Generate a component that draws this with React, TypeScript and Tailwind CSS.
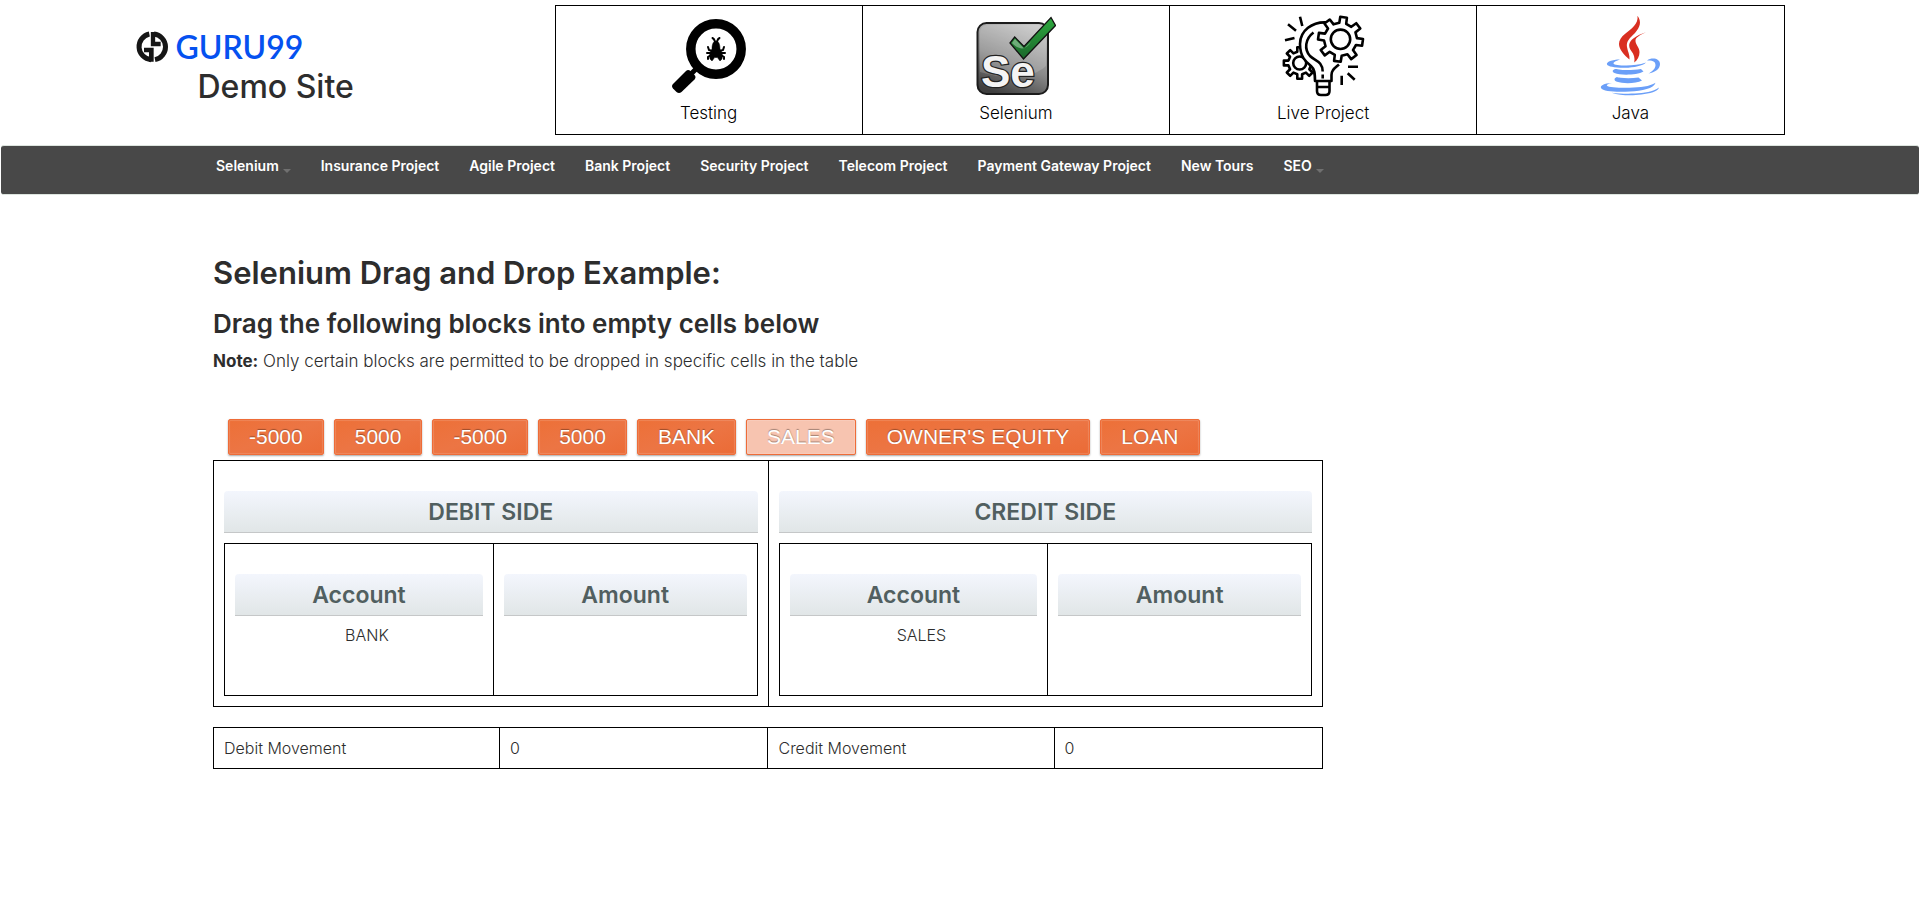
import React from 'react';

function BadgeLogo() {
  return (
    <svg viewBox="0 0 96 96" className="size-8 shrink-0" fill="none" stroke="#161616" strokeWidth="15" aria-hidden="true">
      <path d="M40 9A39 39 0 0 0 45 86" />
      <path d="M57 86A39 39 0 0 0 54 9" />
      <path d="M46 92V57H24" strokeWidth="14" />
      <path d="M51 3V39H74" strokeWidth="13" />
    </svg>
  );
}

function TestingIcon() {
  return (
    <svg viewBox="0 0 80 80" className="size-20" fill="none" stroke="#000" aria-hidden="true">
      <circle cx="47" cy="33" r="25.200" strokeWidth="9.500" />
      <path d="M22 58l6-6" strokeWidth="5" />
      <path
        d="M4 68L17 55q2-2 4.500 0l4 4q2 2 0 4.500L12.500 76q-2.500 2-5 0L4 72.500Q2 70 4 68z"
        fill="#000"
        stroke="none"
      />
      <path
        d="M47 25c-3 0-4 4-4 8-2 3-3 6-2 10l2 2 3-4 1 1 1-1 3 4 2-2c1-4 0-7-2-10 0-4-1-8-4-8z"
        fill="#000"
        strokeWidth="0.500"
      />
      <path
        d="M46 26c-.500-2-.500-3-2.500-4M48 26c.500-2 .500-3 2.500-4M43 35l-3-1-1-3M51 35l3-1 1-3M42 37l-4 0M52 37l4 0M42 39l-3 2v2M52 39l3 2v2"
        strokeWidth="2"
        strokeLinecap="round"
      />
    </svg>
  );
}

function SeleniumIcon() {
  return (
    <svg viewBox="0 0 80 80" className="size-20" aria-hidden="true">
      <defs>
        <linearGradient id="se-box" x1="0.700" y1="0" x2="0.300" y2="1">
          <stop offset="0" stopColor="#c4c4c4" />
          <stop offset="0.550" stopColor="#8a8a8a" />
          <stop offset="1" stopColor="#3f3f3f" />
        </linearGradient>
        <linearGradient id="se-tick" x1="0" y1="0" x2="0" y2="1">
          <stop offset="0" stopColor="#2eaa3f" />
          <stop offset="1" stopColor="#19662a" />
        </linearGradient>
      </defs>
      <rect x="1.500" y="7" width="70.500" height="71" rx="9" fill="url(#se-box)" stroke="#1c1c1c" strokeWidth="2" />
      <path d="M4 56C25 62 52 66 70 50V17q0-8-8-8H12q-8 0-8 8z" fill="#fff" opacity="0.160" />
      <text
        x="5"
        y="71"
        className="font-['Liberation_Sans',sans-serif] text-[44px] font-bold"
        fill="#f4f4f4"
        stroke="#222"
        strokeWidth="2.500"
        paintOrder="stroke"
      >
        Se
      </text>
      <path d="M34 27l4.700-6 9.300 9.500L75 1.500 79.500 9.500 47.500 43z" fill="url(#se-tick)" stroke="#111" strokeWidth="1.300" />
      <path d="M36 27l3-4 9 9.500L55 26c-5 8-11 9-19 1z" fill="#fff" opacity="0.350" />
    </svg>
  );
}

function gearPath(cx: number, cy: number, outer: number, root: number, teeth: number, turn: number) {
  const step = (Math.PI * 2) / teeth;
  const points: string[] = [];
  for (let i = 0; i < teeth; i++) {
    const a = turn + i * step;
    const corners: [number, number][] = [
      [root, -0.27],
      [outer, -0.19],
      [outer, 0.19],
      [root, 0.27],
    ];
    corners.forEach(([r, f]) => {
      points.push(`${(cx + r * Math.sin(a + f * step)).toFixed(2)} ${(cy - r * Math.cos(a + f * step)).toFixed(2)}`);
    });
  }
  return `M${points.join('L')}Z`;
}

function LiveProjectIcon() {
  return (
    <svg
      viewBox="0 0 80 80"
      className="size-20 overflow-visible"
      fill="none"
      stroke="#000"
      strokeWidth="2.600"
      strokeLinejoin="round"
      aria-hidden="true"
    >
      <path d={gearPath(16.7, 47, 16, 11.5, 8, 0)} />
      <circle cx="16.700" cy="47" r="6.500" />
      <path
        d="M45 6.500C29 5 17 15 17 28c0 13 6 18 11 22 3.500 3 4 7 4 15h16.500v-7c0-4 3-6 7.500-9.500L64 30z"
        fill="#fff"
        stroke="none"
      />
      <path d="M45 6.500C29 5 17 15 17 28c0 13 6 18 11 22 3.500 3 4 7 4 15h16.500v-6c0-5 3-6.500 7.500-10.500" />
      <path d="M30.500 16.500C22 23 21 33 27 40c5 5 12.500 5 12.700 15.500M39.700 58.500v4" />
      <path d={gearPath(57.5, 23.3, 22.5, 16.5, 8, 0.14)} fill="#fff" />
      <circle cx="57.500" cy="23.300" r="9.700" />
      <path d="M34 65v10q0 4 4 4h4.500q4 0 4-4V65M34 71h12.500" />
      <path d="M17 .700l2.300 9.300M5 8.300l8 6.400M2 24.300l9.500-2.300M65 50.700h10M64.700 57.300l7 6.500M58.700 59.700V69" />
    </svg>
  );
}

function JavaIcon() {
  return (
    <svg viewBox="0 0 80 80" className="size-20 overflow-visible" aria-hidden="true">
      <g fill="#d92f21">
        <path d="M47.500-.300C52 6 50 11 45 17c-5 5-9 8-8 14 .500 4 3 8 2.500 12.500C34 39 29 33 29 28c0-8 10-12 15-18 2.500-3 4-6 3.500-10.300z" />
        <path d="M56 16.300c-6 3-11 5-10.500 9 .500 4 4 6 4 11 0 4-2 8-5.200 10.200.700-5-.300-8-3-11.500-3.500-5-2.500-9 2-12.500 4-3 8-4.500 12.700-6.200z" />
      </g>
      <g fill="#6b9ff8">
        <path d="M30 43.500c-8 0-14 2.500-13 5 1 2 8 3.500 18 3.300 9-.200 18-2 21-5.300-7 2.500-15 3.200-22 3-7-.200-11-1-10.500-2.500.300-1.200 3-2.200 6.500-3.500z" />
        <path d="M57 44.500c5-3.500 13-2 13 3.500 0 5-5 8.500-11.500 9.500 4-2 7-5 7-8.500 0-4-4-4.500-8.500-4.500z" />
        <path d="M25.500 53c-3 .700-4 2.500-1 4 6 2.500 22 2.300 29-1.500l-2.500-2.500c-7 1.200-17 1.500-22 .500-2-.400-3-.500-3.500-.500z" />
        <path d="M27 61c-3 1-3.500 3.500 0 4.800 6 2 19 2 25-1.300l-3.500-3c-6 1-13 1-18 .300-2-.300-3-.500-3.500-.800z" />
        <path d="M22 67c-8 .300-12 2.500-11 5 2 4 17 4 29 3.500 12-.500 24-3 25.500-8.700-6 3.700-15 4.700-26 5-10 .200-21-.300-22.500-2-.700-1.200 2-2.200 5-2.800z" />
        <path d="M21.500 76.700c9 3 21 3 30 1.800 8-1 16.500-3 17.500-7-6 4.500-15 5.500-24 6-9 .400-16 0-23.500-.800z" />
      </g>
    </svg>
  );
}

const topics = [
  { label: 'Testing', Icon: TestingIcon },
  { label: 'Selenium', Icon: SeleniumIcon },
  { label: 'Live Project', Icon: LiveProjectIcon },
  { label: 'Java', Icon: JavaIcon },
];

const navItems = [
  { label: 'Selenium', menu: true },
  { label: 'Insurance Project' },
  { label: 'Agile Project' },
  { label: 'Bank Project' },
  { label: 'Security Project' },
  { label: 'Telecom Project' },
  { label: 'Payment Gateway Project' },
  { label: 'New Tours' },
  { label: 'SEO', menu: true },
];

const blocks = [
  { label: '-5000' },
  { label: '5000' },
  { label: '-5000' },
  { label: '5000' },
  { label: 'BANK' },
  { label: 'SALES', used: true },
  { label: "OWNER'S EQUITY" },
  { label: 'LOAN' },
];

const sides = [
  { title: 'DEBIT SIDE', account: 'BANK' },
  { title: 'CREDIT SIDE', account: 'SALES' },
];

function BarTitle({ children }: { children: React.ReactNode }) {
  return (
    <h3 className="mt-5 h-[42px] rounded-t-sm border-b border-[#c5c7c8] bg-gradient-to-b from-[#f3f6fd] to-[#e1e6e7] text-center text-[23px] leading-[42px] font-semibold text-[#515f60]">
      {children}
    </h3>
  );
}

function SideTable({ account }: { account: string }) {
  return (
    <table className="mt-2.5 w-full table-fixed border-collapse border border-black">
      <tbody>
        <tr className="h-[152px] align-top">
          <td className="w-[50.500%] border border-black p-2.5">
            <BarTitle>Account</BarTitle>
            <ul className="pt-1.5 pl-4 text-center text-base leading-[26px]">
              <li>{account}</li>
            </ul>
          </td>
          <td className="border border-black p-2.5">
            <BarTitle>Amount</BarTitle>
          </td>
        </tr>
      </tbody>
    </table>
  );
}

export default function App() {
  return (
    <div className="bg-white font-['Inter',sans-serif] font-light text-[#2d2d2d]">
      <header className="mx-auto flex max-w-[1649px] pt-[5px]">
        <div className="w-[419px] shrink-0 pt-[21px]">
          <a href="#home" className="flex items-center gap-2">
            <BadgeLogo />
            <span className="font-['Lato',sans-serif] text-[32px] leading-[42px] font-semibold text-[#0551f0]">GURU99</span>
          </a>
          <h2 className="pl-[62px] text-[32px] leading-[38px] font-medium">Demo Site</h2>
        </div>
        <table className="w-full table-fixed border-collapse border border-black">
          <tbody>
            <tr>
              {topics.map(({ label, Icon }) => (
                <td key={label} className="border border-black pt-2.5 pb-1">
                  <a href="#topic" className="flex flex-col items-center text-[17px] leading-[34px] text-black">
                    <Icon />
                    {label}
                  </a>
                </td>
              ))}
            </tr>
          </tbody>
        </table>
      </header>

      <nav className="mx-px mt-2.5 h-[50px] rounded-[3px] border-y border-[#dde5df] bg-[#484848]">
        <ul className="mx-auto flex max-w-[1488px] gap-[30px] text-sm leading-10 font-semibold text-white">
          {navItems.map(({ label, menu }) => (
            <li key={label}>
              <a href="#page" className="flex items-center gap-1 whitespace-nowrap">
                {label}
                {menu && (
                  <svg viewBox="0 0 8 4" className="mt-2.5 h-1 w-2" fill="#707070" aria-hidden="true">
                    <path d="M0 0h8L4 4z" />
                  </svg>
                )}
              </a>
            </li>
          ))}
        </ul>
      </nav>

      <main className="mx-auto max-w-[1494px] pt-[55px]">
        <h1 className="text-[31px] leading-[46px] font-semibold">Selenium Drag and Drop Example:</h1>
        <h2 className="mt-2 text-[26px] leading-10 font-semibold">Drag the following blocks into empty cells below</h2>
        <p className="mt-[3px] text-[17px] leading-7">
          <strong className="font-bold">Note:</strong> Only certain blocks are permitted to be dropped in specific cells in the table
        </p>

        <div className="max-w-[1110px]">
          <ul className="mt-11 flex gap-2.5 pl-[15px]">
            {blocks.map(({ label, used }, i) => (
              <li key={i}>
                <button
                  type="button"
                  className={`h-9 rounded-xs border border-[#ee6c38] px-5 font-['Liberation_Sans',Arial,sans-serif] text-[21px] leading-[34px] font-normal whitespace-nowrap text-white shadow-[inset_0_0_1px_1px_rgba(255,255,255,0.15),0_1px_2px_rgba(0,0,0,0.35)] [text-shadow:0_-1px_1px_rgba(0,0,0,0.35)] ${
                    used ? 'bg-[#f7c4b0]' : 'bg-gradient-to-br from-[#ed7037] via-[#ec7544] to-[#eb6b36]'
                  }`}
                >
                  {label}
                </button>
              </li>
            ))}
          </ul>

          <table className="mt-[5px] w-full table-fixed border-collapse border border-black">
            <tbody>
              <tr>
                {sides.map(({ title, account }) => (
                  <td key={title} className="border border-black p-2.5 align-top">
                    <BarTitle>{title}</BarTitle>
                    <SideTable account={account} />
                  </td>
                ))}
              </tr>
            </tbody>
          </table>

          <table className="mt-5 w-full table-fixed border-collapse border border-black text-base leading-5">
            <tbody>
              <tr>
                <td className="w-[25.800%] border border-black p-2.5">Debit Movement</td>
                <td className="w-[24.200%] border border-black p-2.5">0</td>
                <td className="w-[25.800%] border border-black p-2.5">Credit Movement</td>
                <td className="w-[24.200%] border border-black p-2.5">0</td>
              </tr>
            </tbody>
          </table>
        </div>
      </main>
    </div>
  );
}
